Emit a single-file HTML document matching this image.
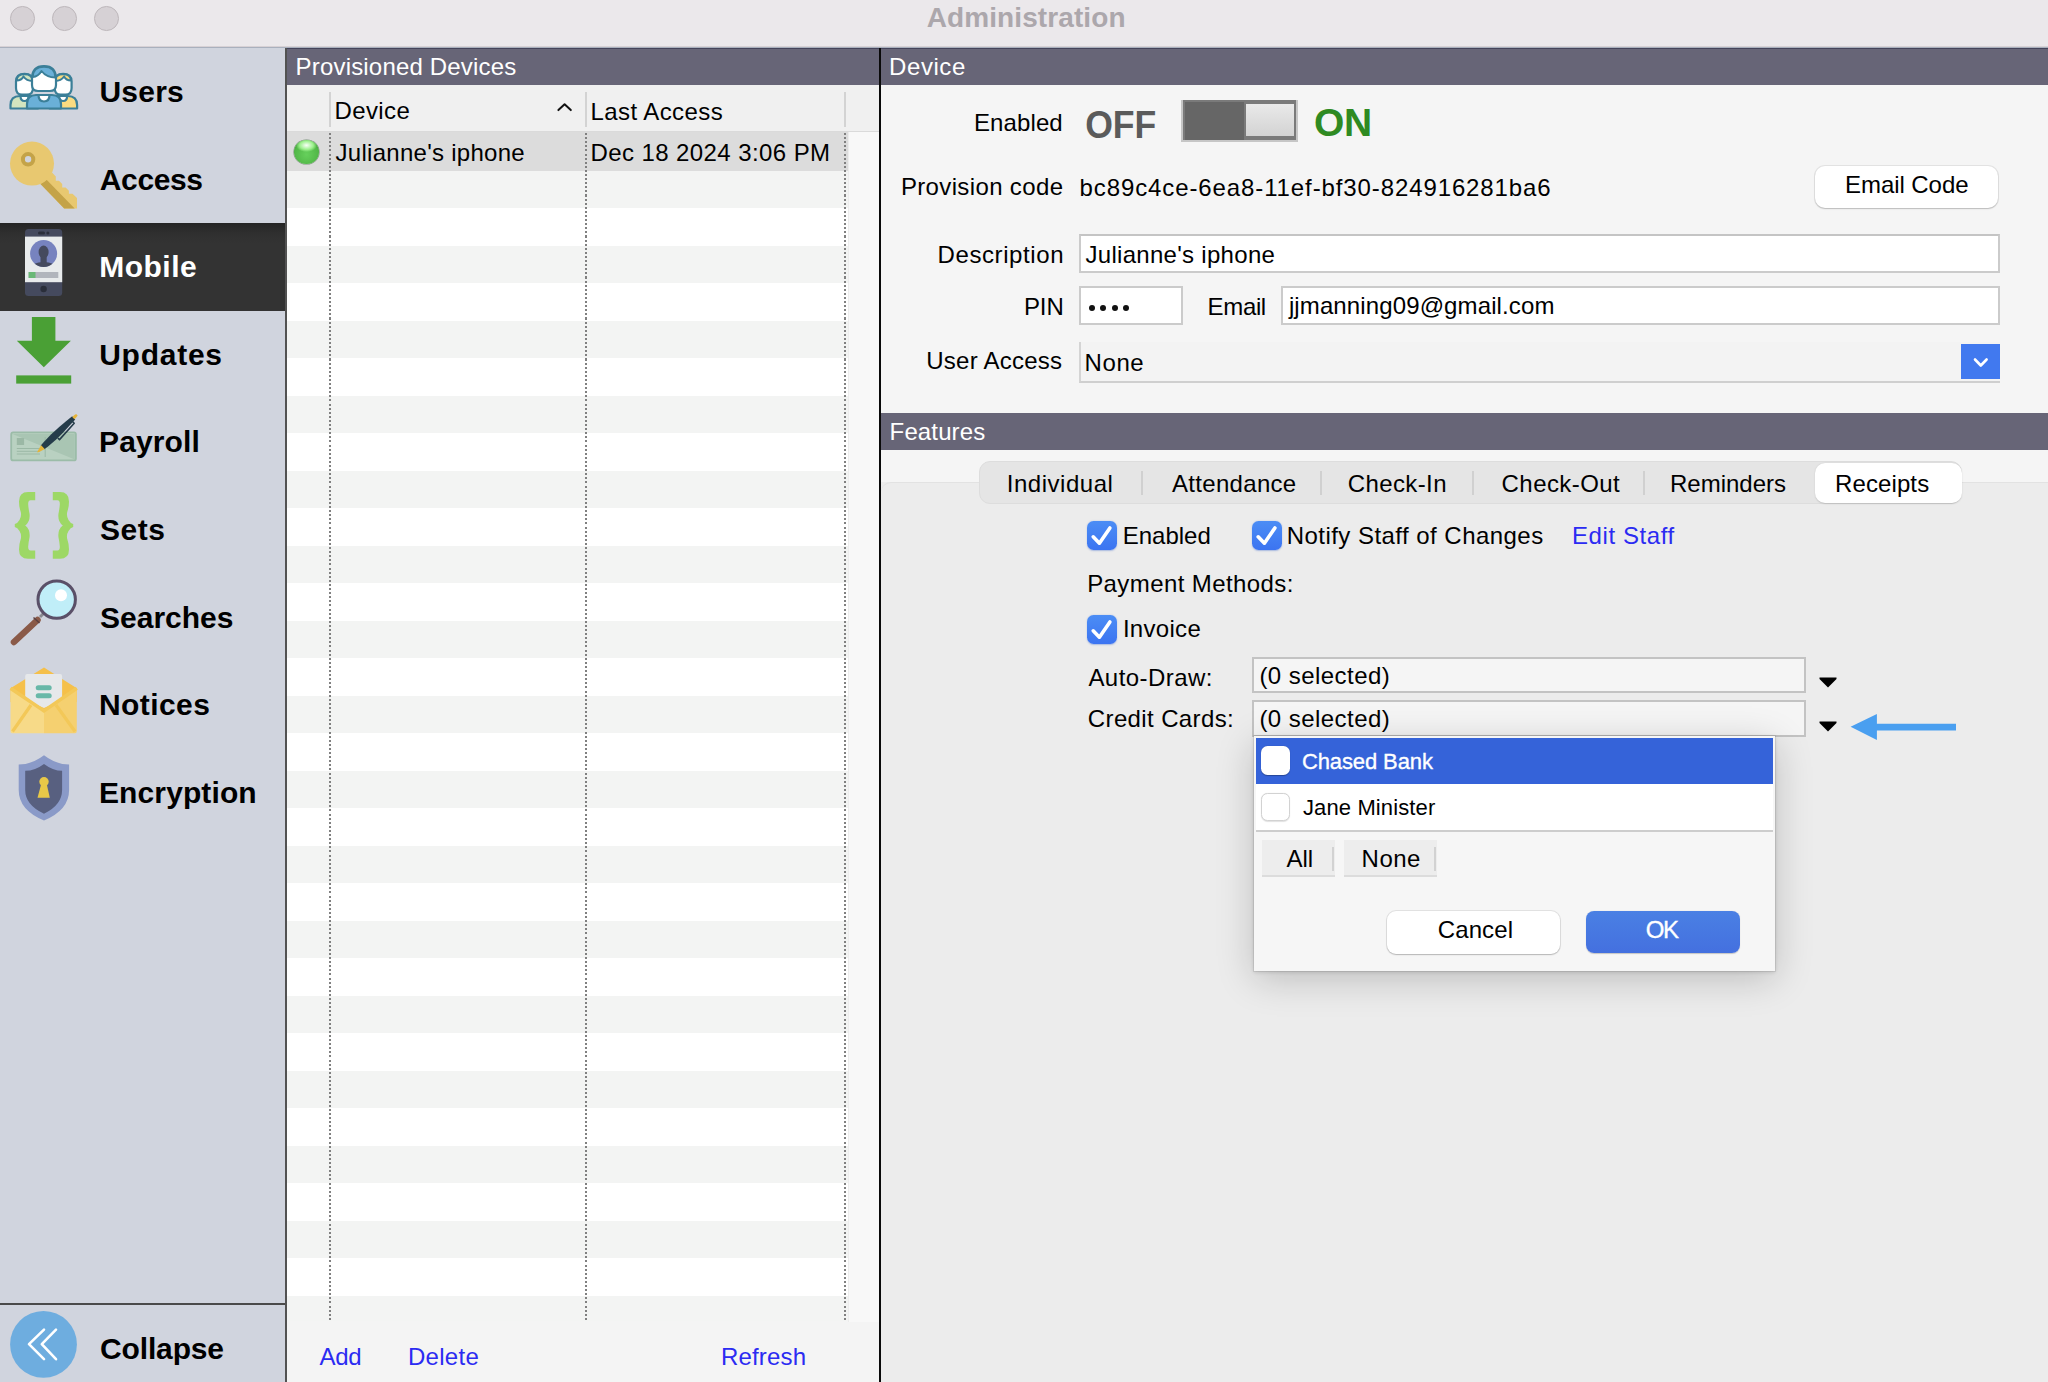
<!DOCTYPE html>
<html><head><meta charset="utf-8">
<style>
*{margin:0;padding:0;box-sizing:border-box}
html,body{width:2048px;height:1382px;overflow:hidden;background:#ececec;font-family:"Liberation Sans",sans-serif;color:#000}
.a{position:absolute}
.t{position:absolute;white-space:nowrap;line-height:1}
</style></head>
<body>
<div class="a" style="left:0px;top:0px;width:2048px;height:46px;background:#ebe8eb;"></div>
<div class="a" style="left:10.1px;top:6px;width:24.8px;height:24.8px;border-radius:50%;background:#d6d1d5;border:1px solid #bdb7bb"></div>
<div class="a" style="left:51.9px;top:6px;width:24.8px;height:24.8px;border-radius:50%;background:#d6d1d5;border:1px solid #bdb7bb"></div>
<div class="a" style="left:94.0px;top:6px;width:24.8px;height:24.8px;border-radius:50%;background:#d6d1d5;border:1px solid #bdb7bb"></div>
<div class="a" style="left:0px;top:46px;width:2048px;height:1px;background:#d7d1d5;"></div>
<div class="a" style="left:0px;top:47px;width:2048px;height:1px;background:#a9b0bd;"></div>
<div class="a" style="left:0px;top:48px;width:285px;height:1334px;background:#d0d4de;"></div>
<div class="a" style="left:0px;top:223px;width:285px;height:87.6px;background:linear-gradient(#242424,#2f2f2f 10px,#333333 20px);"></div>
<div class="a" style="left:285px;top:48px;width:2px;height:1334px;background:#525252;"></div>
<div class="a" style="left:0px;top:1303px;width:285px;height:2px;background:#4a4a4a;"></div>

<svg class="a" style="left:0;top:0" width="285" height="1382" viewBox="0 0 285 1382">
<!-- Users -->
<g stroke="#3b7f98" stroke-width="2.2" stroke-linejoin="round">
 <path d="M10.5,108.5 V105 Q10.5,96 20,96 H30 Q38,96 38,105 V108.5 Z" fill="#d3e5bf"/>
 <path d="M77.1,108.5 V105 Q77.1,96 67.6,96 H57.6 Q49.6,96 49.6,105 V108.5 Z" fill="#fadb80"/>
 <path d="M20.5,96 Q20.5,101 24.5,101 Q28.5,101 28.5,96 Z" fill="#fff"/>
 <path d="M67.1,96 Q67.1,101 63.1,101 Q59.1,101 59.1,96 Z" fill="#fff"/>
 <path d="M16,84 V81.5 Q16,73.8 24.5,73.8 Q33,73.8 33,81.5 V88 Q33,94.6 27,94.6 H22 Q16,94.6 16,88 Z" fill="#fff"/>
 <path d="M16.6,80.5 Q17,74.3 24.5,74.3 Q32.5,74.3 32.5,81 Q26.5,81 23.5,76.5 Q21.5,80.5 16.6,80.5 Z" fill="#d3e5bf" stroke-width="1.9"/>
 <path d="M71.6,84 V81.5 Q71.6,73.8 63.1,73.8 Q54.6,73.8 54.6,81.5 V88 Q54.6,94.6 60.6,94.6 H65.6 Q71.6,94.6 71.6,88 Z" fill="#fff"/>
 <path d="M71,80.5 Q70.6,74.3 63.1,74.3 Q55.1,74.3 55.1,81 Q61.1,81 64.1,76.5 Q66.1,80.5 71,80.5 Z" fill="#fadb80" stroke-width="1.9"/>
 <path d="M27,108.5 V104 Q27,95 36,95 H52 Q61,95 61,104 V108.5 Z" fill="#6ab0d8"/>
 <path d="M38.5,95 Q38.5,101.5 44,101.5 Q49.5,101.5 49.5,95 Z" fill="#fff"/>
 <path d="M32,79 Q32,66.2 44,66.2 Q56,66.2 56,79 V85 Q56,91 50,91 H38 Q32,91 32,85 Z" fill="#fff"/>
 <path d="M32.6,77 Q33,66.8 44,66.8 Q55.4,66.8 55.4,77.5 Q46.5,77.5 41.5,71 Q38.5,76.5 32.6,77 Z" fill="#6ab0d8" stroke-width="1.9"/>
</g>
<!-- Key -->
<g>
 <path d="M40.5,184 L52,172.5 L55.8,176.5 V180.7 H59 L62.2,184 V187.4 H65.6 L68.9,190.7 V193.7 H72.5 L77,198 V208.5 H64.2 Z" fill="#e8c870"/>
 <path d="M40.5,184 L46.6,179.8 L74.7,208.5 H64.2 Z" fill="#c4a348"/>
 <circle cx="32" cy="163.6" r="22" fill="#e8c870"/>
 <circle cx="28.1" cy="159.3" r="5.2" fill="#d0d4de" stroke="#c4a348" stroke-width="4"/>
</g>
<!-- Mobile -->
<g>
 <rect x="25" y="229" width="37.2" height="67" rx="3.5" fill="#454a5e"/>
 <rect x="25" y="236.6" width="37.2" height="45.6" fill="#e8ebec"/>
 <rect x="38" y="231.5" width="7" height="3" rx="1.5" fill="#2a2e3a"/>
 <circle cx="47.9" cy="233" r="1.5" fill="#2a2e3a"/>
 <circle cx="43.6" cy="253.5" r="13.5" fill="#7783bf"/>
 <clipPath id="av"><circle cx="43.6" cy="253.5" r="13.5"/></clipPath>
 <g clip-path="url(#av)" fill="#454a5e">
  <ellipse cx="43.6" cy="252" rx="5" ry="6.5"/>
  <rect x="40.5" y="255" width="6.2" height="8"/>
  <ellipse cx="43.6" cy="268" rx="13" ry="6"/>
 </g>
 <rect x="28.6" y="272" width="29.7" height="6" fill="#b1b5bc"/>
 <rect x="28.6" y="272" width="6.9" height="6" fill="#6ab876"/>
 <circle cx="43.6" cy="289" r="3.2" fill="#2a2e3a"/>
</g>
<!-- Updates -->
<g fill="#4aa035">
 <path d="M31.9,317 H55.4 V340.7 H70.9 L43.8,367.3 L16.8,340.7 H31.9 Z"/>
 <rect x="16.2" y="375.4" width="55" height="8.2"/>
</g>
<!-- Payroll -->
<g>
 <rect x="11.2" y="432.4" width="64.7" height="28" rx="2" fill="#b9d1c1" stroke="#9bbca8" stroke-width="1.8"/>
 <path d="M12.5,434 H74.8 V459.6 Z" fill="#a9c5b3"/>
 <rect x="16.8" y="438" width="7.3" height="7" fill="#9bb8a5"/>
 <path d="M16.8,448.5 H40 M16.8,451.3 H40 M16.8,454 H40" stroke="#9bb8a5" stroke-width="1"/>
 <path d="M45.2,437 V457" stroke="#9bb8a5" stroke-width="1"/>
   <path d="M71.8,420.8 L74.2,423.2 L59.5,439.6 L57.8,438" fill="none" stroke="#253c4a" stroke-width="1.6" stroke-linejoin="round"/>
 <path d="M44.36,449.36 L48.33,446.27 L55.92,439.74 L63.02,432.70 L69.85,425.37 L75.23,419.42 L72.20,416.24 L65.99,421.32 L58.34,427.78 L50.95,434.52 L44.06,441.78 L40.78,445.59 Z" fill="#253c4a"/>
 <path d="M37.78,452.59 L40.64,451.25 L44.73,449.01 L41.14,445.25 L38.71,449.22 L37.22,452.01 Z" fill="#e6b43a"/>
 <path d="M74.46,419.33 L76.20,417.54 L77.66,415.59 L76.15,414.00 L74.13,415.36 L72.25,417.01 Z" fill="#e6b43a"/>
</g>
<!-- Sets -->
<g fill="#9dd865">
 <path d="M35.2,492 H28 Q19,492 19,501.5 Q19,507 20.5,511 Q22,516 19.5,520 Q17.5,523.5 14.8,524 V527 Q17.5,527.5 19.5,531 Q22,535 20.5,540 Q19,544 19,549.5 Q19,558.8 28,558.8 H35.2 V550.5 H30.5 Q28,550.5 28.2,546.5 Q28.5,542 29.5,537.5 Q30.5,529.5 25.2,525.5 Q30.5,521.5 29.5,513.5 Q28.5,509 28.2,504.5 Q28,500.2 30.5,500.2 H35.2 Z"/>
 <path d="M 52.8,492 H 60.0 Q 69.0,492 69.0,501.5 Q 69.0,507 67.5,511 Q 66.0,516 68.5,520 Q 70.5,523.5 73.2,524 V 527 Q 70.5,527.5 68.5,531 Q 66.0,535 67.5,540 Q 69.0,544 69.0,549.5 Q 69.0,558.8 60.0,558.8 H 52.8 V 550.5 H 57.5 Q 60.0,550.5 59.8,546.5 Q 59.5,542 58.5,537.5 Q 57.5,529.5 62.8,525.5 Q 57.5,521.5 58.5,513.5 Q 59.5,509 59.8,504.5 Q 60.0,500.2 57.5,500.2 H 52.8 Z"/>
</g>
<!-- Searches -->
<g>
 <path d="M40,617 L44,613" stroke="#8a8a90" stroke-width="3"/>
 <path d="M37.5,620 L14,642" stroke="#8a5a48" stroke-width="6.5" stroke-linecap="round"/>
 <path d="M33.5,617.5 L39.5,623" stroke="#5a4040" stroke-width="1.5"/>
 <circle cx="56.7" cy="599.6" r="18.7" fill="#c0eef8" stroke="#5a5068" stroke-width="3"/>
 <circle cx="61" cy="595.3" r="6" fill="#fff"/>
</g>
<!-- Notices -->
<g>
 <path d="M10.5,688.3 L44,667.4 L76.8,688.3 V702 L44,712 L10.5,702 Z" fill="#f5c04a"/>
 <path d="M25.2,676 Q25.2,674 27.2,674 H60.1 Q62.1,674 62.1,676 V700 L44,708 L25.2,700 Z" fill="#e6e8ea"/>
 <rect x="35.7" y="685.2" width="16" height="5" rx="2.5" fill="#68b8a8"/>
 <rect x="35.7" y="693.2" width="16" height="5" rx="2.5" fill="#68b8a8"/>
 <path d="M10.5,688.3 L44,711 V733.2 H12 Q10.5,733.2 10.5,731 Z" fill="#f7da88"/>
 <path d="M76.8,688.3 L44,711 V733.2 H75 Q76.8,733.2 76.8,731 Z" fill="#f5d070"/>
 <path d="M10.5,688.3 L44,711 L76.8,688.3" fill="none" stroke="#f3c858" stroke-width="3.5"/>
 <path d="M12.5,731.5 L31,705 M75,731.5 L56,705" stroke="#f3c858" stroke-width="3.2"/>
</g>
<!-- Encryption -->
<g>
 <path d="M44,755.3 Q32,764.5 18.7,764.5 V790 Q18.7,810 44,820.5 Q69.1,810 69.1,790 V764.5 Q56,764.5 44,755.3 Z" fill="#8a9ac8"/>
 <path d="M44,763.9 Q35,770.7 25.2,770.7 V790 Q25.2,805 44,813.7 Q62.1,805 62.1,790 V770.7 Q53,770.7 44,763.9 Z" fill="#586080"/>
 <circle cx="44" cy="781.7" r="4.7" fill="#e8c848"/>
 <path d="M41.5,783 H46.5 L49.8,797.7 H37.5 Z" fill="#e8c848"/>
</g>
<!-- Collapse -->
<circle cx="43.5" cy="1344.4" r="33.4" fill="#6eaddf"/>
<path d="M44,1329.6 L29,1344.1 L44,1359.2 M56,1329.6 L41.8,1344.1 L56,1359.2" fill="none" stroke="#fff" stroke-width="2.6" stroke-linecap="round" stroke-linejoin="round"/>
</svg>

<div class="a" style="left:287px;top:48px;width:592px;height:37px;background:#676577;"></div>
<div class="a" style="left:287px;top:48px;width:592px;height:1px;background:#44435a;"></div>
<div class="a" style="left:287px;top:85px;width:592px;height:46px;background:#f0f0f0;"></div>
<div class="a" style="left:287px;top:131px;width:592px;height:1px;background:#dadada;"></div>
<div class="a" style="left:287px;top:132px;width:592px;height:1250px;background:#f4f4f4;"></div>
<div class="a" style="left:287px;top:132px;width:562px;height:38.6px;background:#dcdcdc;"></div>
<div class="a" style="left:287px;top:170.6px;width:562px;height:37.5px;background:#f3f4f3;"></div>
<div class="a" style="left:287px;top:208.1px;width:562px;height:37.5px;background:#ffffff;"></div>
<div class="a" style="left:287px;top:245.6px;width:562px;height:37.5px;background:#f3f4f3;"></div>
<div class="a" style="left:287px;top:283.1px;width:562px;height:37.5px;background:#ffffff;"></div>
<div class="a" style="left:287px;top:320.6px;width:562px;height:37.5px;background:#f3f4f3;"></div>
<div class="a" style="left:287px;top:358.1px;width:562px;height:37.5px;background:#ffffff;"></div>
<div class="a" style="left:287px;top:395.6px;width:562px;height:37.5px;background:#f3f4f3;"></div>
<div class="a" style="left:287px;top:433.1px;width:562px;height:37.5px;background:#ffffff;"></div>
<div class="a" style="left:287px;top:470.6px;width:562px;height:37.5px;background:#f3f4f3;"></div>
<div class="a" style="left:287px;top:508.1px;width:562px;height:37.5px;background:#ffffff;"></div>
<div class="a" style="left:287px;top:545.6px;width:562px;height:37.5px;background:#f3f4f3;"></div>
<div class="a" style="left:287px;top:583.1px;width:562px;height:37.5px;background:#ffffff;"></div>
<div class="a" style="left:287px;top:620.6px;width:562px;height:37.5px;background:#f3f4f3;"></div>
<div class="a" style="left:287px;top:658.1px;width:562px;height:37.5px;background:#ffffff;"></div>
<div class="a" style="left:287px;top:695.6px;width:562px;height:37.5px;background:#f3f4f3;"></div>
<div class="a" style="left:287px;top:733.1px;width:562px;height:37.5px;background:#ffffff;"></div>
<div class="a" style="left:287px;top:770.6px;width:562px;height:37.5px;background:#f3f4f3;"></div>
<div class="a" style="left:287px;top:808.1px;width:562px;height:37.5px;background:#ffffff;"></div>
<div class="a" style="left:287px;top:845.6px;width:562px;height:37.5px;background:#f3f4f3;"></div>
<div class="a" style="left:287px;top:883.1px;width:562px;height:37.5px;background:#ffffff;"></div>
<div class="a" style="left:287px;top:920.6px;width:562px;height:37.5px;background:#f3f4f3;"></div>
<div class="a" style="left:287px;top:958.1px;width:562px;height:37.5px;background:#ffffff;"></div>
<div class="a" style="left:287px;top:995.6px;width:562px;height:37.5px;background:#f3f4f3;"></div>
<div class="a" style="left:287px;top:1033.1px;width:562px;height:37.5px;background:#ffffff;"></div>
<div class="a" style="left:287px;top:1070.6px;width:562px;height:37.5px;background:#f3f4f3;"></div>
<div class="a" style="left:287px;top:1108.1px;width:562px;height:37.5px;background:#ffffff;"></div>
<div class="a" style="left:287px;top:1145.6px;width:562px;height:37.5px;background:#f3f4f3;"></div>
<div class="a" style="left:287px;top:1183.1px;width:562px;height:37.5px;background:#ffffff;"></div>
<div class="a" style="left:287px;top:1220.6px;width:562px;height:37.5px;background:#f3f4f3;"></div>
<div class="a" style="left:287px;top:1258.1px;width:562px;height:37.5px;background:#ffffff;"></div>
<div class="a" style="left:287px;top:1295.6px;width:562px;height:25.9px;background:#f3f4f3;"></div>
<div class="a" style="left:849px;top:132px;width:30px;height:1189.5px;background:#f8f8f8;"></div>
<div class="a" style="left:848px;top:132px;width:1px;height:1189.5px;background:#ececec;"></div>
<div class="a" style="left:329px;top:133px;width:2px;height:1188px;background:repeating-linear-gradient(to bottom,#808080 0,#808080 2px,transparent 2px,transparent 4.1px)"></div>
<div class="a" style="left:585.3px;top:133px;width:2px;height:1188px;background:repeating-linear-gradient(to bottom,#808080 0,#808080 2px,transparent 2px,transparent 4.1px)"></div>
<div class="a" style="left:844px;top:133px;width:2px;height:1188px;background:repeating-linear-gradient(to bottom,#808080 0,#808080 2px,transparent 2px,transparent 4.1px)"></div>
<div class="a" style="left:329px;top:92px;width:2px;height:35px;background:#d3d3d3;"></div>
<div class="a" style="left:585.3px;top:92px;width:2px;height:35px;background:#d3d3d3;"></div>
<div class="a" style="left:844px;top:92px;width:2px;height:35px;background:#d3d3d3;"></div>
<svg class="a" style="left:555px;top:101px" width="20" height="14" viewBox="0 0 20 14"><path d="M3.4,9.1 L9.6,3.3 L15.8,9.1" fill="none" stroke="#111" stroke-width="2" stroke-linecap="round" stroke-linejoin="round"/></svg>
<div class="a" style="left:294.4px;top:140px;width:24.2px;height:24px;border-radius:50%;background:radial-gradient(ellipse 60% 40% at 50% 22%,#fafffa 0,#9cf08c 45%,transparent 70%),radial-gradient(circle at 50% 60%,#66d05c 0,#52b848 60%,#3a8a34 100%);box-shadow:0 0 0 0.6px rgba(50,90,50,0.55)"></div>
<div class="a" style="left:879px;top:48px;width:2px;height:1334px;background:#0a0a0a;"></div>
<div class="a" style="left:881px;top:48px;width:1167px;height:37px;background:#676577;"></div>
<div class="a" style="left:881px;top:48px;width:1167px;height:1px;background:#44435a;"></div>
<div class="a" style="left:881px;top:85px;width:1167px;height:328px;background:#f5f5f5;"></div>
<div class="a" style="left:1181.3px;top:99.9px;width:116.5px;height:41.8px;background:#c6c6c6;"></div>
<div class="a" style="left:1183px;top:100.1px;width:113.1px;height:39.7px;background:#7a7a7a;"></div>
<div class="a" style="left:1185px;top:102px;width:59.2px;height:37.8px;background:#666666;"></div>
<div class="a" style="left:1245.9px;top:104px;width:48.1px;height:31.5px;background:linear-gradient(#e9e9e9,#d3d3d3)"></div>
<div class="a" style="left:1815px;top:166px;width:183px;height:41.5px;border-radius:10px;background:#fff;box-shadow:0 0 0 1px rgba(0,0,0,0.07),0 1px 1.5px rgba(0,0,0,0.18)"></div>
<div class="a" style="left:1079px;top:234px;width:921px;height:39px;background:#fff;border:2px solid #cbcbcb;border-top-color:#c4c4c4"></div>
<div class="a" style="left:1079px;top:286.4px;width:104px;height:38.6px;background:#fff;border:2px solid #cbcbcb"></div>
<div class="a" style="left:1281px;top:286px;width:719px;height:39px;background:#fff;border:2px solid #cbcbcb"></div>
<div class="a" style="left:1088.5px;top:304.5px;width:6px;height:6px;border-radius:50%;background:#111"></div>
<div class="a" style="left:1100.0px;top:304.5px;width:6px;height:6px;border-radius:50%;background:#111"></div>
<div class="a" style="left:1111.5px;top:304.5px;width:6px;height:6px;border-radius:50%;background:#111"></div>
<div class="a" style="left:1123.0px;top:304.5px;width:6px;height:6px;border-radius:50%;background:#111"></div>
<div class="a" style="left:1079px;top:342px;width:921px;height:41px;background:#f3f3f3;border-left:2px solid #d4d4d4;border-bottom:2px solid #cfcfcf"></div>
<div class="a" style="left:1960.5px;top:344px;width:39.5px;height:35px;background:#4179ef"></div>
<svg class="a" style="left:1960.5px;top:344px" width="40" height="35" viewBox="0 0 40 35"><path d="M14,15.5 L19.8,21.5 L25.6,15.5" fill="none" stroke="#fff" stroke-width="2.6" stroke-linecap="round" stroke-linejoin="round"/></svg>
<div class="a" style="left:881px;top:413px;width:1167px;height:37px;background:#676577;"></div>
<div class="a" style="left:881px;top:450px;width:1167px;height:32px;background:#f5f5f5;"></div>
<div class="a" style="left:881px;top:482px;width:1167px;height:900px;background:#ececec;border-top:1px solid #e2e2e2;border-top-left-radius:10px"></div>
<div class="a" style="left:979.3px;top:461px;width:983px;height:43px;background:#e5e5e5;border:1px solid #dddddd;border-radius:11px"></div>
<div class="a" style="left:1815px;top:463px;width:147px;height:40px;background:#fff;border-radius:10px;box-shadow:0 0.5px 1.5px rgba(0,0,0,0.15)"></div>
<div class="a" style="left:1140.9px;top:470.5px;width:2px;height:24.3px;background:#d0d0d0;"></div>
<div class="a" style="left:1320.4px;top:470.5px;width:2px;height:24.3px;background:#d0d0d0;"></div>
<div class="a" style="left:1471.8px;top:470.5px;width:2px;height:24.3px;background:#d0d0d0;"></div>
<div class="a" style="left:1643.2px;top:470.5px;width:2px;height:24.3px;background:#d0d0d0;"></div>
<div class="a" style="left:1087.4px;top:521px;width:29.5px;height:29px;border-radius:6.5px;background:linear-gradient(#4b8df5,#3c74f1);box-shadow:0 0.5px 1.5px rgba(40,90,200,0.35)"></div><svg class="a" style="left:1087.4px;top:521px" width="30" height="30" viewBox="0 0 30 30"><path d="M6.2,15.8 L12.4,22.2 L22.9,6.9" fill="none" stroke="#fff" stroke-width="3.6" stroke-linecap="round" stroke-linejoin="round"/></svg>
<div class="a" style="left:1252.4px;top:521px;width:29.5px;height:29px;border-radius:6.5px;background:linear-gradient(#4b8df5,#3c74f1);box-shadow:0 0.5px 1.5px rgba(40,90,200,0.35)"></div><svg class="a" style="left:1252.4px;top:521px" width="30" height="30" viewBox="0 0 30 30"><path d="M6.2,15.8 L12.4,22.2 L22.9,6.9" fill="none" stroke="#fff" stroke-width="3.6" stroke-linecap="round" stroke-linejoin="round"/></svg>
<div class="a" style="left:1087.4px;top:615.3px;width:29.5px;height:29px;border-radius:6.5px;background:linear-gradient(#4b8df5,#3c74f1);box-shadow:0 0.5px 1.5px rgba(40,90,200,0.35)"></div><svg class="a" style="left:1087.4px;top:615.3px" width="30" height="30" viewBox="0 0 30 30"><path d="M6.2,15.8 L12.4,22.2 L22.9,6.9" fill="none" stroke="#fff" stroke-width="3.6" stroke-linecap="round" stroke-linejoin="round"/></svg>
<div class="a" style="left:1252.3px;top:657.3px;width:553.5px;height:36px;background:#f5f5f5;border:2px solid #c3c3c3"></div>
<div class="a" style="left:1252.3px;top:700.4px;width:553.5px;height:37px;background:#f5f5f5;border:2px solid #c3c3c3"></div>
<svg class="a" style="left:1817.5px;top:676.5px" width="20" height="12" viewBox="0 0 20 12"><path d="M1.5,0.5 H18.5 V2 L10,10.5 L1.5,2 Z" fill="#000"/></svg>
<svg class="a" style="left:1817.5px;top:720.5px" width="20" height="12" viewBox="0 0 20 12"><path d="M1.5,0.5 H18.5 V2 L10,10.5 L1.5,2 Z" fill="#000"/></svg>
<svg class="a" style="left:1848px;top:712px" width="112" height="30" viewBox="0 0 112 30"><path d="M2.6,14.7 L28.9,1.9 V11.8 H108 V18.5 H28.9 V28.1 Z" fill="#4a9ff0"/></svg>
<div class="a" style="left:1253.7px;top:736px;width:521.4px;height:235px;background:#f6f6f6;box-shadow:0 8px 36px rgba(0,0,0,0.2),0 1px 4px rgba(0,0,0,0.15),0 0 0 1px rgba(0,0,0,0.07)"></div>
<div class="a" style="left:1255.9px;top:737.8px;width:517.3px;height:46px;background:#3563d9;"></div>
<div class="a" style="left:1255.9px;top:783.8px;width:517.3px;height:46.4px;background:#ffffff;"></div>
<div class="a" style="left:1255.9px;top:830.2px;width:517.3px;height:2px;background:#cdcdcd;"></div>
<div class="a" style="left:1260.5px;top:746px;width:29.3px;height:28.7px;border-radius:6.5px;background:#fff;box-shadow:0 0.5px 1px rgba(0,0,0,0.3)"></div>
<div class="a" style="left:1260.5px;top:792.5px;width:29.3px;height:28.1px;border-radius:6.5px;background:#fff;border:1px solid #d2d2d2;box-shadow:0 0.5px 1px rgba(0,0,0,0.12)"></div>
<div class="a" style="left:1262.4px;top:840.3px;width:73px;height:37px;background:#ededed;border-bottom:2px solid #dcdcdc"></div>
<div class="a" style="left:1343.9px;top:840.3px;width:93.5px;height:37px;background:#ededed;border-bottom:2px solid #dcdcdc"></div>
<div class="a" style="left:1331.5px;top:847px;width:2px;height:24px;background:#d2d2d2;"></div>
<div class="a" style="left:1433.5px;top:847px;width:2px;height:24px;background:#d2d2d2;"></div>
<div class="a" style="left:1387.1px;top:911.4px;width:173.4px;height:42.4px;border-radius:9px;background:#fff;box-shadow:0 0 0 1px rgba(0,0,0,0.08),0 1px 1.5px rgba(0,0,0,0.2)"></div>
<div class="a" style="left:1585.6px;top:910.8px;width:154.2px;height:41.9px;border-radius:8px;background:linear-gradient(#4a80e4,#4470df);box-shadow:0 0.5px 1px rgba(0,0,0,0.2)"></div>
<div class="t" style="left:926.7px;top:3.9px;font-size:28px;font-weight:bold;letter-spacing:0.10px;color:#aca7ac;">Administration</div>
<div class="t" style="left:99.5px;top:77.0px;font-size:30px;font-weight:bold;letter-spacing:0.20px;">Users</div>
<div class="t" style="left:99.8px;top:164.6px;font-size:30px;font-weight:bold;letter-spacing:-0.38px;">Access</div>
<div class="t" style="left:99.2px;top:252.2px;font-size:30px;font-weight:bold;letter-spacing:0.50px;color:#fff;">Mobile</div>
<div class="t" style="left:99.2px;top:339.8px;font-size:30px;font-weight:bold;letter-spacing:0.75px;">Updates</div>
<div class="t" style="left:99.0px;top:427.4px;font-size:30px;font-weight:bold;letter-spacing:0.12px;">Payroll</div>
<div class="t" style="left:100.0px;top:515.0px;font-size:30px;font-weight:bold;letter-spacing:0.50px;">Sets</div>
<div class="t" style="left:100.0px;top:602.6px;font-size:30px;font-weight:bold;">Searches</div>
<div class="t" style="left:99.0px;top:690.2px;font-size:30px;font-weight:bold;letter-spacing:0.42px;">Notices</div>
<div class="t" style="left:99.0px;top:778.0px;font-size:30px;font-weight:bold;letter-spacing:0.11px;">Encryption</div>
<div class="t" style="left:100.0px;top:1334.0px;font-size:30px;font-weight:bold;letter-spacing:-0.14px;">Collapse</div>
<div class="t" style="left:295.6px;top:54.8px;font-size:24px;letter-spacing:0.18px;color:#fff;">Provisioned Devices</div>
<div class="t" style="left:334.6px;top:98.8px;font-size:24px;letter-spacing:0.36px;">Device</div>
<div class="t" style="left:590.4px;top:99.5px;font-size:24px;letter-spacing:0.43px;">Last Access</div>
<div class="t" style="left:335.6px;top:140.5px;font-size:24px;letter-spacing:0.27px;">Julianne&#x27;s iphone</div>
<div class="t" style="left:590.4px;top:141.0px;font-size:24px;letter-spacing:0.42px;">Dec 18 2024 3:06 PM</div>
<div class="t" style="left:319.5px;top:1345.2px;font-size:24px;letter-spacing:-0.35px;color:#2b2bf2;">Add</div>
<div class="t" style="left:407.9px;top:1345.2px;font-size:24px;letter-spacing:0.32px;color:#2b2bf2;">Delete</div>
<div class="t" style="left:721.0px;top:1345.2px;font-size:24px;letter-spacing:0.17px;color:#2b2bf2;">Refresh</div>
<div class="t" style="left:889.1px;top:54.5px;font-size:24px;letter-spacing:0.56px;color:#fff;">Device</div>
<div class="t" style="left:974.0px;top:111.1px;font-size:24px;letter-spacing:0.10px;">Enabled</div>
<div class="t" style="left:1085.0px;top:104.7px;font-size:39px;font-weight:bold;transform:scaleX(0.913);transform-origin:2px 0;color:#5b5b5b;">OFF</div>
<div class="t" style="left:1314.0px;top:102.7px;font-size:39px;font-weight:bold;letter-spacing:-0.40px;color:#2f8a22;">ON</div>
<div class="t" style="left:900.9px;top:175.4px;font-size:24px;letter-spacing:0.36px;">Provision code</div>
<div class="t" style="left:1079.6px;top:176.0px;font-size:24px;letter-spacing:0.89px;">bc89c4ce-6ea8-11ef-bf30-824916281ba6</div>
<div class="t" style="left:1845.0px;top:172.5px;font-size:24px;letter-spacing:-0.06px;">Email Code</div>
<div class="t" style="left:937.5px;top:242.6px;font-size:24px;letter-spacing:0.60px;">Description</div>
<div class="t" style="left:1085.5px;top:243.0px;font-size:24px;letter-spacing:0.29px;">Julianne&#x27;s iphone</div>
<div class="t" style="left:1024.0px;top:294.7px;font-size:24px;letter-spacing:-0.15px;">PIN</div>
<div class="t" style="left:1207.6px;top:294.7px;font-size:24px;letter-spacing:-0.35px;">Email</div>
<div class="t" style="left:1288.9px;top:294.4px;font-size:24px;letter-spacing:0.12px;">jjmanning09@gmail.com</div>
<div class="t" style="left:926.3px;top:348.8px;font-size:24px;letter-spacing:0.24px;">User Access</div>
<div class="t" style="left:1084.5px;top:351.0px;font-size:24px;letter-spacing:0.60px;">None</div>
<div class="t" style="left:889.6px;top:420.3px;font-size:24px;letter-spacing:0.13px;color:#fff;">Features</div>
<div class="t" style="left:1006.7px;top:471.7px;font-size:24px;letter-spacing:0.54px;">Individual</div>
<div class="t" style="left:1172.0px;top:471.7px;font-size:24px;letter-spacing:0.31px;">Attendance</div>
<div class="t" style="left:1347.7px;top:471.7px;font-size:24px;letter-spacing:0.40px;">Check-In</div>
<div class="t" style="left:1501.6px;top:471.7px;font-size:24px;letter-spacing:0.43px;">Check-Out</div>
<div class="t" style="left:1670.0px;top:471.7px;font-size:24px;">Reminders</div>
<div class="t" style="left:1835.0px;top:471.7px;font-size:24px;letter-spacing:0.11px;">Receipts</div>
<div class="t" style="left:1122.7px;top:524.1px;font-size:24px;">Enabled</div>
<div class="t" style="left:1286.7px;top:524.1px;font-size:24px;letter-spacing:0.46px;">Notify Staff of Changes</div>
<div class="t" style="left:1572.0px;top:524.1px;font-size:24px;letter-spacing:0.58px;color:#2b2bf2;">Edit Staff</div>
<div class="t" style="left:1087.2px;top:571.7px;font-size:24px;letter-spacing:0.41px;">Payment Methods:</div>
<div class="t" style="left:1122.9px;top:617.1px;font-size:24px;letter-spacing:0.30px;">Invoice</div>
<div class="t" style="left:1088.4px;top:666.1px;font-size:24px;letter-spacing:0.44px;">Auto-Draw:</div>
<div class="t" style="left:1259.4px;top:663.6px;font-size:24px;letter-spacing:0.45px;">(0 selected)</div>
<div class="t" style="left:1087.8px;top:707.3px;font-size:24px;letter-spacing:0.38px;">Credit Cards:</div>
<div class="t" style="left:1259.4px;top:707.3px;font-size:24px;letter-spacing:0.45px;">(0 selected)</div>
<div class="t" style="left:1301.9px;top:751.2px;font-size:22px;letter-spacing:-0.11px;color:#fff;-webkit-text-stroke:0.35px #fff;">Chased Bank</div>
<div class="t" style="left:1303.0px;top:797.2px;font-size:22px;letter-spacing:0.12px;">Jane Minister</div>
<div class="t" style="left:1286.5px;top:847.1px;font-size:24px;">All</div>
<div class="t" style="left:1361.6px;top:847.1px;font-size:24px;letter-spacing:0.50px;">None</div>
<div class="t" style="left:1437.8px;top:918.0px;font-size:24px;letter-spacing:0.10px;">Cancel</div>
<div class="t" style="left:1645.8px;top:918.2px;font-size:24px;letter-spacing:-1.50px;color:#fff;-webkit-text-stroke:0.35px #fff;">OK</div>
</body></html>
